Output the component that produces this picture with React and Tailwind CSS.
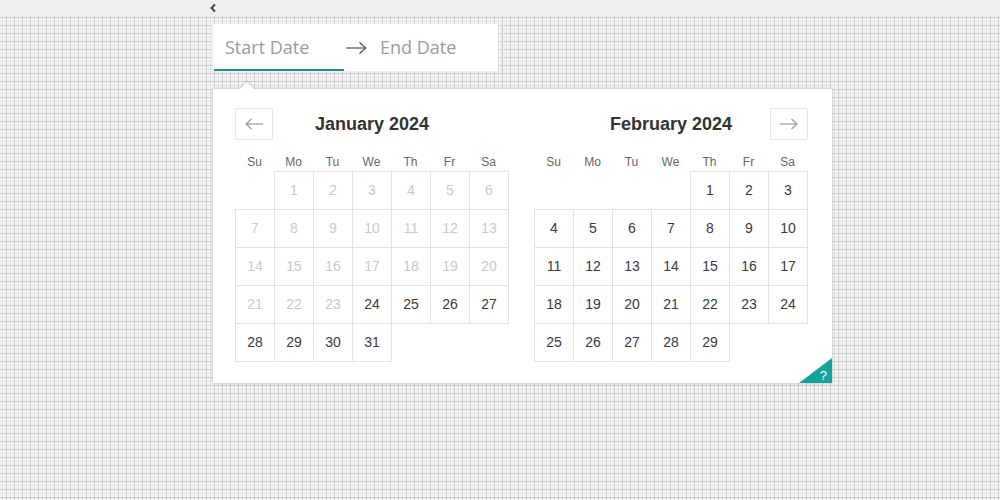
import React from "react";

const jan = [
  null, 1, 2, 3, 4, 5, 6,
  7, 8, 9, 10, 11, 12, 13,
  14, 15, 16, 17, 18, 19, 20,
  21, 22, 23, 24, 25, 26, 27,
  28, 29, 30, 31,
];

const feb = [
  null, null, null, null, 1, 2, 3,
  4, 5, 6, 7, 8, 9, 10,
  11, 12, 13, 14, 15, 16, 17,
  18, 19, 20, 21, 22, 23, 24,
  25, 26, 27, 28, 29,
];

const weekdays = ["Su", "Mo", "Tu", "We", "Th", "Fr", "Sa"];

function Arrow({ dir = "right", className = "" }) {
  return (
    <svg width="20" height="12" viewBox="0 0 20 12" className={className} fill="none" stroke="currentColor" strokeWidth="1.2">
      {dir === "right" ? (
        <>
          <path d="M1 6h17" />
          <path d="M12.5 1l5.5 5-5.5 5" />
        </>
      ) : (
        <>
          <path d="M19 6H2" />
          <path d="M7.5 1L2 6l5.5 5" />
        </>
      )}
    </svg>
  );
}

function Month({ title, days, minDay, nav }) {
  return (
    <div className="flex flex-col w-[274px]">
      <div className="relative h-8 flex items-center justify-center">
        {nav === "prev" && (
          <button className="absolute left-0 top-0 w-[38px] h-8 border border-[#e6e6e6] rounded-[2px] flex items-center justify-center text-[#9a9a9a]">
            <Arrow dir="left" />
          </button>
        )}
        <h2 className="text-[18px] font-bold text-[#333]">{title}</h2>
        {nav === "next" && (
          <button className="absolute right-0 top-0 w-[38px] h-8 border border-[#e6e6e6] rounded-[2px] flex items-center justify-center text-[#9a9a9a]">
            <Arrow dir="right" />
          </button>
        )}
      </div>

      <div className="grid grid-cols-[repeat(7,39px)] mt-[13px] h-[18px] text-[12px] text-[#666]">
        {weekdays.map((w) => (
          <div key={w} className="text-center leading-[18px]">{w}</div>
        ))}
      </div>

      <div className="grid grid-cols-[repeat(7,39px)] auto-rows-[38px]">
        {days.map((d, i) =>
          d === null ? (
            <div key={i} />
          ) : (
            <div
              key={i}
              className={
                "border border-[#e2e2e2] -mr-px -mb-px flex items-center justify-center text-[14px] " +
                (d < minDay ? "text-[#c9c9c9]" : "text-[#3a3a3a]")
              }
            >
              {d}
            </div>
          )
        )}
      </div>
    </div>
  );
}

export default function App() {
  return (
    <div
      className="min-h-[500px] w-full bg-[#f4f4f4] bg-[linear-gradient(to_right,#cdcdcd_1px,transparent_1px),linear-gradient(to_bottom,#cdcdcd_1px,transparent_1px),linear-gradient(to_right,transparent_4px,#e4e4e4_4px,#e4e4e4_5px,transparent_5px),linear-gradient(to_bottom,transparent_4px,#e4e4e4_4px,#e4e4e4_5px,transparent_5px)] bg-[size:8px_8px] bg-[position:6px_1px] font-['Liberation_Sans',Arial,sans-serif]"
    >
      <div className="h-4 bg-[#f0f0f0] pl-[209px] flex items-center">
        <svg width="8" height="10" viewBox="0 0 8 10" fill="none" stroke="#444" strokeWidth="2">
          <path d="M6 1.5L2.5 5 6 8.5" />
        </svg>
      </div>

      <div className="pl-[213px] pt-2">
        <div className="w-[285px] h-[47px] bg-white flex items-center relative font-['Open_Sans',sans-serif] text-[18px] text-[#9b9b9b]">
          <span className="ml-3 w-[120px]">Start Date</span>
          <Arrow dir="right" className="w-[23px] h-[14px] text-[#666]" />
          <span className="ml-3">End Date</span>
          <div className="absolute left-px bottom-0 w-[130px] h-[2px] bg-[#2b8a8e]" />
        </div>

        <div className="relative mt-[18px] w-[619px] bg-white shadow-[0_0_3px_rgba(0,0,0,0.22)] pt-[19px] pb-[22px] pl-[22px] pr-[24px]">
          <div className="absolute -top-[5px] left-[29px] w-[10px] h-[10px] rotate-45 bg-white shadow-[-1px_-1px_2px_rgba(0,0,0,0.12)]" />
          <div className="flex gap-[25px]">
            <Month title="January 2024" days={jan} minDay={24} nav="prev" />
            <Month title="February 2024" days={feb} minDay={0} nav="next" />
          </div>
          <div className="absolute right-0 bottom-0 w-[33px] h-[25px] bg-[#13a399] [clip-path:polygon(100%_0,100%_100%,0_100%)]">
            <span className="absolute right-[5px] bottom-[1px] text-white text-[13px] leading-none">?</span>
          </div>
        </div>
      </div>
    </div>
  );
}
